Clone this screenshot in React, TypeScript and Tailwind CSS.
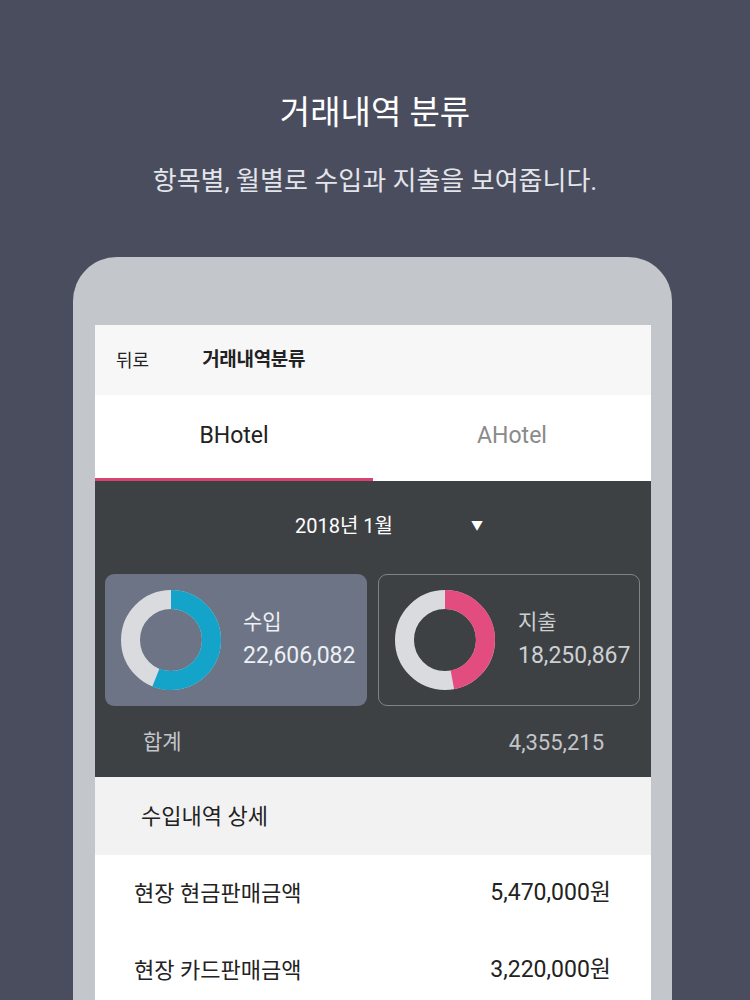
import React from 'react';

const font = { fontFamily: "Roboto, 'Noto Sans CJK KR', 'Noto Sans', sans-serif" };

const Donut: React.FC<{ ratio: number; color: string }> = ({ ratio, color }) => {
  const r = 40.5;
  const c = 2 * Math.PI * r;
  return (
    <svg width="100" height="100" viewBox="0 0 100 100" className="shrink-0">
      <circle cx="50" cy="50" r={r} fill="none" stroke="#d9dbdf" strokeWidth="19" />
      <circle
        cx="50"
        cy="50"
        r={r}
        fill="none"
        stroke={color}
        strokeWidth="19"
        strokeDasharray={`${c * ratio} ${c}`}
        transform="rotate(-90 50 50)"
      />
    </svg>
  );
};

const App: React.FC = () => {
  return (
    <div className="w-[750px] h-[1000px] bg-[#4a4d5e] overflow-hidden flex flex-col" style={font}>
      <h1 className="mt-[92px] text-center text-[33px] leading-[42px] text-white">거래내역 분류</h1>
      <p className="mt-[30px] text-center text-[26px] leading-[34px] text-[#e4e5ea]">
        항목별, 월별로 수입과 지출을 보여줍니다.
      </p>

      <div className="mt-[59px] ml-[73px] w-[599px] flex-1 bg-[#c3c7cb] rounded-t-[44px] pt-[68px] pl-[22px] pr-[21px]">
        <div className="h-full bg-white flex flex-col">
          {/* top bar */}
          <div className="h-[70px] bg-[#f7f7f8] flex items-center pl-[21px] text-[#222]">
            <span className="text-[18px]">뒤로</span>
            <span className="ml-[53px] text-[19px] font-bold tracking-[-0.3px]">거래내역분류</span>
          </div>

          {/* tabs */}
          <div className="h-[86px] flex bg-white">
            <div className="flex-1 flex items-center justify-center text-[23px] text-[#222] border-b-[3px] border-[#d9436f]">
              BHotel
            </div>
            <div className="flex-1 flex items-center justify-center text-[23px] text-[#8a8a8a] border-b-[3px] border-transparent">
              AHotel
            </div>
          </div>

          {/* summary */}
          <div className="h-[296px] bg-[#3e4144] flex flex-col px-[10px]">
            <div className="mt-[31px] h-[28px] relative flex items-center justify-center text-[20px] text-white">
              <span className="mr-[58px]">2018년 1월</span>
              <span className="absolute left-[366px] text-[12px]">▼</span>
            </div>

            <div className="mt-[34px] flex gap-[11px]">
              <div className="w-[262px] h-[132px] rounded-[9px] bg-[#6c7486] flex items-center pl-[16px]">
                <Donut ratio={0.56} color="#14a4c9" />
                <div className="ml-[22px] flex flex-col text-[#eef0f3]">
                  <span className="text-[21px] leading-[31px]">수입</span>
                  <span className="text-[23px] leading-[36px]">22,606,082</span>
                </div>
              </div>
              <div className="w-[262px] h-[132px] rounded-[9px] border border-[#7f8286] flex items-center pl-[16px]">
                <Donut ratio={0.47} color="#e24c7f" />
                <div className="ml-[23px] flex flex-col text-[#cdd0d3]">
                  <span className="text-[21px] leading-[31px]">지출</span>
                  <span className="text-[23px] leading-[36px]">18,250,867</span>
                </div>
              </div>
            </div>

            <div className="mt-[20px] flex items-center justify-between pl-[38px] pr-[37px] text-[#c3c6c9]">
              <span className="text-[21px]">합계</span>
              <span className="text-[22px]">4,355,215</span>
            </div>
          </div>

          {/* detail header */}
          <div className="h-[78px] bg-[#f2f2f3] flex items-center pl-[46px] text-[22px] text-[#222]">
            수입내역 상세
          </div>

          {/* rows */}
          <div className="h-[77px] flex items-center justify-between pl-[39px] pr-[40px] text-[#222]">
            <span className="text-[22px]">현장 현금판매금액</span>
            <span className="text-[23px]">5,470,000원</span>
          </div>
          <div className="h-[77px] flex items-center justify-between pl-[39px] pr-[40px] text-[#222]">
            <span className="text-[22px]">현장 카드판매금액</span>
            <span className="text-[23px]">3,220,000원</span>
          </div>
        </div>
      </div>
    </div>
  );
};

export default App;
